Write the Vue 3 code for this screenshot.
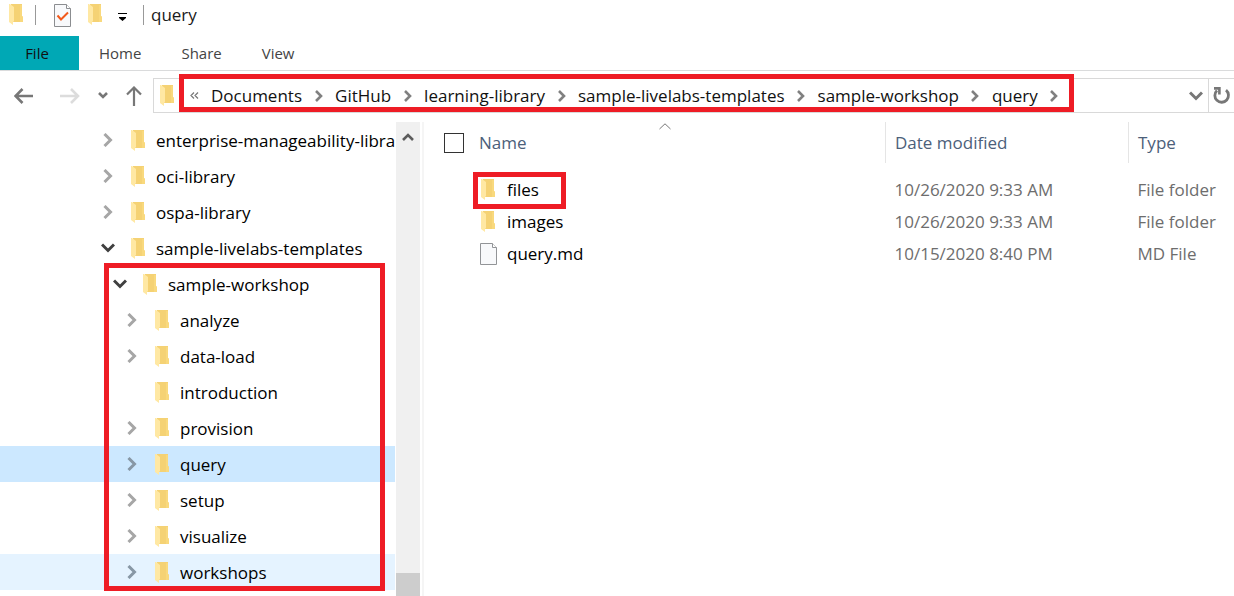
<script setup>
import { h } from 'vue'

const FolderIcon = () =>
  h('svg', { width: 14, height: 22, viewBox: '0 0 14 22', 'aria-hidden': 'true' }, [
    h('path', { d: 'M2 0H13V12L14 13V18H2Z', fill: '#f5d274' }),
    h('path', { d: 'M11 1H13V12L14 13V18H11Z', fill: '#f9d97d' }),
    h('path', { d: 'M0 0H1L5 3V17L4 18V21L0 18Z', fill: '#ffe8a3' }),
  ])

const Chevron = () =>
  h('svg', { width: 10, height: 14, viewBox: '0 0 10 14', fill: 'none', stroke: 'currentColor', 'stroke-width': 3, 'aria-hidden': 'true' }, [
    h('path', { d: 'M1.5 1L7.5 7L1.5 13' }),
  ])

const ChevronDown = () =>
  h('svg', { width: 14, height: 10, viewBox: '0 0 14 10', fill: 'none', stroke: 'currentColor', 'stroke-width': 3, 'aria-hidden': 'true' }, [
    h('path', { d: 'M1 1.5L7 7.5L13 1.5' }),
  ])

const tabs = ['Home', 'Share', 'View']
const crumbs = ['Documents', 'GitHub', 'learning-library', 'sample-livelabs-templates', 'sample-workshop', 'query']
const libraries = [
  { name: 'enterprise-manageability-library' },
  { name: 'oci-library' },
  { name: 'ospa-library' },
  { name: 'sample-livelabs-templates', open: true },
]
const labs = [
  { name: 'analyze' },
  { name: 'data-load' },
  { name: 'introduction', leaf: true },
  { name: 'provision' },
  { name: 'query', state: 'selected' },
  { name: 'setup' },
  { name: 'visualize' },
  { name: 'workshops', state: 'hover' },
]
const files = [
  { name: 'files', date: '10/26/2020 9:33 AM', type: 'File folder', folder: true, marked: true },
  { name: 'images', date: '10/26/2020 9:33 AM', type: 'File folder', folder: true },
  { name: 'query.md', date: '10/15/2020 8:40 PM', type: 'MD File' },
]
</script>

<template>
  <div class="window">
    <header class="titlebar">
      <FolderIcon />
      <span class="divider"></span>
      <button class="tool" aria-label="Properties">
        <svg width="18" height="23" viewBox="0 0 18 23">
          <path d="M.5 .5H12.5L16.5 4.5V22.5H.5Z" fill="#f8f9fb" stroke="#8b8d90" />
          <path d="M12.5 .5V4.5H16.5" fill="#fff" stroke="#8b8d90" />
          <path d="M3.5 11.5L7 15.5L14 8.5" fill="none" stroke="#f2591b" stroke-width="2" />
        </svg>
      </button>
      <button class="tool" aria-label="New folder"><FolderIcon /></button>
      <button class="tool customize" aria-label="Customize quick access">
        <svg width="10" height="9" viewBox="0 0 10 9"><path d="M0 0H9V1H0ZM1 4H8V5L4.5 8L1 5Z" fill="#000" /></svg>
      </button>
      <span class="divider last"></span>
      <span class="title">query</span>
    </header>

    <nav class="tabs" aria-label="Ribbon">
      <button class="file-tab">File</button>
      <button v-for="tab in tabs" :key="tab" class="tab">{{ tab }}</button>
    </nav>

    <div class="navbar">
      <div class="history">
        <button aria-label="Back">
          <svg width="20" height="16" viewBox="0 0 20 16" fill="none" stroke="#777" stroke-width="2.6"><path d="M19 8H2M8.5 1L1.5 8L8.5 15" /></svg>
        </button>
        <button aria-label="Forward" class="forward">
          <svg width="20" height="16" viewBox="0 0 20 16" fill="none" stroke="#dcdcdc" stroke-width="2.6"><path d="M0 8H18M11 1L18 8L11 15" /></svg>
        </button>
        <button aria-label="Recent locations" class="recent">
          <svg width="10" height="8" viewBox="0 0 10 8" fill="none" stroke="#777" stroke-width="2.6"><path d="M1 1L5 5L9 1" /></svg>
        </button>
        <button aria-label="Up">
          <svg width="16" height="20" viewBox="0 0 16 20" fill="none" stroke="#777" stroke-width="2.2"><path d="M8 20V2M1 8.5L8 1.5L15 8.5" /></svg>
        </button>
      </div>
      <div class="address">
        <FolderIcon />
        <div class="crumbs">
          <button class="more" aria-label="More locations">
            <svg width="9" height="7" viewBox="0 0 9 7" fill="none" stroke="#777" stroke-width="1.2"><path d="M4 .5L1 3.5L4 6.5M8 .5L5 3.5L8 6.5" /></svg>
          </button>
          <template v-for="crumb in crumbs" :key="crumb">
            <button class="crumb">{{ crumb }}</button>
            <span class="sep"><svg width="8" height="12" viewBox="0 0 8 12" fill="none" stroke="#808080" stroke-width="2.6"><path d="M1 1L6 6L1 11" /></svg></span>
          </template>
          <span class="mark crumbs-mark"></span>
        </div>
        <button class="drop" aria-label="Previous locations"><ChevronDown /></button>
        <button class="refresh" aria-label="Refresh">
          <svg width="18" height="18" viewBox="0 0 18 18" fill="none" stroke="#777" stroke-width="2.8"><path d="M4 3.5A6.8 6.8 0 1 0 13 3.2" /><path d="M1 1.4H6.4V7.5" stroke-width="2.6" /></svg>
        </button>
      </div>
    </div>

    <main class="body">
      <aside class="sidebar">
        <ul class="tree">
          <li v-for="item in libraries" :key="item.name" class="row">
            <button class="toggle" :class="{ open: item.open }" :aria-label="'Toggle ' + item.name">
              <ChevronDown v-if="item.open" /><Chevron v-else />
            </button>
            <button class="node"><FolderIcon /><span>{{ item.name }}</span></button>
          </li>
          <li class="group">
            <div class="row level-1">
              <button class="toggle open" aria-label="Toggle sample-workshop"><ChevronDown /></button>
              <button class="node"><FolderIcon /><span>sample-workshop</span></button>
            </div>
            <ul>
              <li v-for="item in labs" :key="item.name" class="row level-2" :class="item.state">
                <span v-if="item.leaf" class="toggle"></span>
                <button v-else class="toggle" :aria-label="'Toggle ' + item.name"><Chevron /></button>
                <button class="node"><FolderIcon /><span>{{ item.name }}</span></button>
              </li>
            </ul>
            <span class="mark group-mark"></span>
          </li>
        </ul>
        <div class="scrollbar">
          <button aria-label="Scroll up">
            <svg width="12" height="10" viewBox="0 0 12 10" fill="none" stroke="#5c5c5c" stroke-width="2.6"><path d="M1 8L6 3L11 8" /></svg>
          </button>
          <span class="thumb"></span>
        </div>
      </aside>

      <section class="content">
        <table>
          <thead>
            <tr>
              <th class="name-col">
                <div class="name-head">
                  <input type="checkbox" aria-label="Select all" />
                  <span>Name</span>
                  <svg class="sort" width="12" height="7" viewBox="0 0 12 7" fill="none" stroke="#777"><path d="M.5 6L6 .8L11.5 6" /></svg>
                </div>
              </th>
              <th class="date-col">Date modified</th>
              <th class="type-col">Type</th>
            </tr>
          </thead>
          <tbody>
            <tr v-for="file in files" :key="file.name">
              <td>
                <div class="entry">
                  <FolderIcon v-if="file.folder" />
                  <svg v-else class="doc" width="17" height="22" viewBox="0 0 17 22">
                    <path d="M.5 .5H12.5L16.5 4.5V21.5H.5Z" fill="#f8f9fb" stroke="#929497" />
                    <path d="M12.5 .5V4.5H16.5" fill="#fff" stroke="#929497" />
                  </svg>
                  <span>{{ file.name }}</span>
                  <span v-if="file.marked" class="mark file-mark"></span>
                </div>
              </td>
              <td>{{ file.date }}</td>
              <td>{{ file.type }}</td>
            </tr>
          </tbody>
        </table>
      </section>
    </main>
  </div>
</template>

<style>
body {
  margin: 0;
  background: #fff;
}
</style>

<style scoped>
.window {
  display: flex;
  flex-direction: column;
  height: 100vh;
  overflow: hidden;
  background: #fff;
  color: #1a1a1a;
  font: 17px/24px "Open Sans", "Noto Sans", sans-serif;
}
button {
  display: flex;
  align-items: center;
  justify-content: center;
  flex: none;
  padding: 0;
  border: 0;
  background: none;
  color: inherit;
  font: inherit;
}
svg {
  display: block;
  flex: none;
}
ul {
  margin: 0;
  padding: 0;
  list-style: none;
}
.mark {
  position: absolute;
  border: 5px solid #ee1c25;
  pointer-events: none;
}

.titlebar {
  display: flex;
  align-items: center;
  flex: none;
  height: 30px;
  padding: 0 9px 6px;
}
.divider {
  width: 1px;
  height: 20px;
  margin: 0 18px 0 12px;
  background: #999;
}
.tool {
  margin-right: 16px;
}
.tool.customize {
  margin: 4px 0 0;
}
.divider.last {
  margin: 0 7px 0 15px;
}

.tabs {
  display: flex;
  flex: none;
  height: 34px;
  border-bottom: 1px solid #dadbdc;
  font-size: 15px;
  color: #444;
}
.tab {
  padding: 0 20px;
}
.file-tab {
  width: 79px;
  padding-right: 5px;
  background: #00a8b5;
  color: #111;
}

.navbar {
  display: flex;
  align-items: center;
  flex: none;
  height: 49px;
  color: #111;
}
.history {
  display: flex;
  align-items: center;
  flex: none;
  box-sizing: border-box;
  width: 153px;
  padding-left: 14px;
}
.forward {
  margin-left: 26px;
}
.recent {
  margin: 0 18px;
}
.address {
  display: flex;
  align-items: center;
  flex: 1;
  min-width: 0;
  height: 33px;
  border: 1px solid #d9d9d9;
  border-right: 0;
  padding-left: 6px;
}
.crumbs {
  position: relative;
  display: flex;
  align-items: center;
  height: 33px;
  padding-left: 16px;
}
.more {
  width: 9px;
  margin-right: 12px;
}
.sep {
  display: flex;
  justify-content: center;
  width: 33px;
}
.crumbs-mark {
  inset: -5px -3px 0 5px;
}
.drop {
  margin-left: auto;
  width: 24px;
  color: #777;
}
.refresh {
  width: 26px;
  height: 33px;
  border-left: 1px solid #d9d9d9;
}

.body {
  display: flex;
  flex: 1;
  min-height: 0;
  padding-top: 2px;
}
.sidebar {
  display: flex;
  flex: none;
  width: 420px;
  padding-right: 2px;
  border-right: 2px solid #f5f5f5;
  color: #000;
}
.tree {
  flex: 1;
  min-width: 0;
}
.row {
  display: flex;
  align-items: center;
  height: 36px;
  padding-left: 100px;
}
.level-1 {
  padding-left: 112px;
}
.level-2 {
  padding-left: 124px;
}
.selected {
  background: #cce8ff;
}
.hover {
  background: #e5f3ff;
}
.toggle {
  flex: none;
  width: 16px;
  margin-right: 15px;
  color: #a6a6a6;
}
.toggle.open {
  color: #404040;
}
.selected .toggle,
.hover .toggle {
  color: #8797a5;
}
.node {
  flex: 1;
  justify-content: flex-start;
  gap: 11px;
  min-width: 0;
  padding-top: 2px;
  overflow: hidden;
  white-space: nowrap;
}
.group {
  position: relative;
}
.group-mark {
  inset: -3px 10px -1px 104px;
}
.scrollbar {
  display: flex;
  flex-direction: column;
  justify-content: space-between;
  width: 24px;
  margin-left: 1px;
  background: #f0f0f0;
}
.scrollbar button {
  height: 29px;
}
.thumb {
  height: 23px;
  background: #cdcdcd;
}

.content {
  flex: 1;
  min-width: 0;
}
table {
  width: 100%;
  table-layout: fixed;
  border-collapse: collapse;
}
th {
  position: relative;
  height: 41px;
  padding: 0 0 0 9px;
  color: #4c607a;
  font-weight: 400;
  text-align: left;
}
.date-col,
.type-col {
  border-left: 1px solid #e5e5e5;
}
.date-col {
  width: 233px;
}
.type-col {
  width: 96px;
}
.name-head {
  display: flex;
  align-items: center;
  gap: 15px;
  padding-left: 11px;
}
input {
  appearance: none;
  flex: none;
  box-sizing: border-box;
  width: 20px;
  height: 20px;
  margin: 0;
  border: 1px solid #333;
  background: #fff;
}
.sort {
  position: absolute;
  top: 1px;
  left: calc(50% + 4px);
}
tbody::before {
  display: block;
  height: 11px;
  content: "";
}
td {
  height: 32px;
  padding: 0 0 0 9px;
  color: #6d6d6d;
  white-space: nowrap;
}
.entry {
  position: relative;
  display: flex;
  align-items: center;
  gap: 12px;
  width: 82px;
  margin-left: 48px;
  color: #000;
}
.doc {
  margin-left: -1px;
  margin-right: -2px;
}
.file-mark {
  inset: -6px -3px -7px -8px;
}
</style>
